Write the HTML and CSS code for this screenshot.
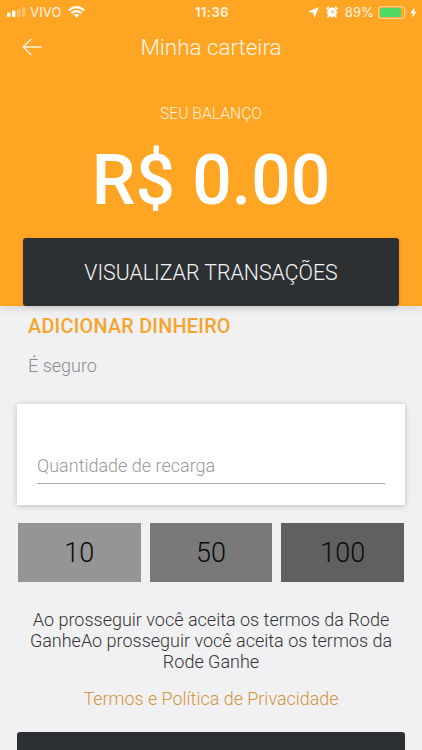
FILE: index.html
```
<!DOCTYPE html>
<html lang="pt-BR">
<head>
<meta charset="utf-8">
<meta name="viewport" content="width=device-width, initial-scale=1">
<title>Minha carteira</title>
<link rel="stylesheet" href="styles.css">
</head>
<body>
<header class="hero">
  <div class="status">
    <div class="status-left">
      <svg class="signal" width="19" height="10" viewBox="0 0 19 10" fill="#fff"><rect y="5.5" width="3.4" height="4.5" rx="1"/><rect x="5" y="3.5" width="3.4" height="6.5" rx="1"/><rect x="10" y="2" width="3.4" height="8" rx="1" opacity=".3"/><rect x="15" y="0" width="3.4" height="10" rx="1" opacity=".3"/></svg>
      <span class="carrier">VIVO</span>
      <svg class="wifi" width="17" height="12" viewBox="0 0 17 12" fill="none" stroke="#fff" stroke-width="2.1"><path d="M.8 4.4Q8.5-2 16.2 4.4M3.5 7.2Q8.5 3 13.5 7.2"/><path d="M5.7 8.8Q8.5 6.7 11.3 8.8L8.5 11.7Z" fill="#fff" stroke="none"/></svg>
    </div>
    <span class="time">11:36</span>
    <div class="status-right">
      <svg width="11" height="11" viewBox="0 0 11 11" fill="#fff"><path d="M11 0 6.4 11 5.3 5.8 0 4.8Z"/></svg>
      <svg class="alarm" width="12" height="12" viewBox="0 0 12 12"><path d="M.5 3.2 3 .9M11.5 3.2 9 .9M2.6 10 1.8 11.3M9.4 10l.8 1.3" stroke="#fff" stroke-width="1.6" fill="none"/><circle cx="6" cy="6.4" r="4.9" fill="#fff"/><path d="M6 3.8v2.8h2.2" stroke="#ffa524" stroke-width="1" fill="none"/></svg>
      <span class="percent">89%</span>
      <svg class="battery" width="29" height="13" viewBox="0 0 29 13"><rect x=".6" y=".6" width="26" height="11.8" rx="3" fill="none" stroke="#ffd397" stroke-width="1.1"/><rect x="2" y="2" width="21" height="9" rx="1.5" fill="#4cd964"/><path d="M27.8 4.5q1.6 2 0 4z" fill="#ffd397"/></svg>
      <svg class="bolt" width="7" height="11" viewBox="0 0 7 11" fill="#fff"><path d="M5 0 .3 6.2H3L1.9 11 6.7 4.5H4Z"/></svg>
    </div>
  </div>
  <nav class="nav">
    <svg width="20" height="18" viewBox="0 0 20 18" fill="none" stroke="#fff2dc" stroke-width="1.5"><path d="M9.4 1 1.2 9l8.2 8M1.2 9H19.5"/></svg>
    <h1>Minha carteira</h1>
  </nav>
  <p class="label">SEU BALANÇO</p>
  <p class="balance">R$ 0.00</p>
  <button class="transactions">VISUALIZAR TRANSAÇÕES</button>
</header>
<main>
  <h2>ADICIONAR DINHEIRO</h2>
  <p class="safe">É seguro</p>
  <div class="card"><div class="field"><span>Quantidade de recarga</span></div></div>
  <div class="amounts">
    <button class="amount low">10</button>
    <button class="amount mid">50</button>
    <button class="amount high">100</button>
  </div>
  <p class="terms">Ao prosseguir você aceita os termos da Rode<br>GanheAo prosseguir você aceita os termos da<br>Rode Ganhe</p>
  <a class="policy">Termos e Política de Privacidade</a>
  <div class="submit"></div>
</main>
</body>
</html>
```
FILE: styles.css
```
* { box-sizing: border-box; margin: 0; padding: 0; }
body { display: flex; flex-direction: column; width: 422px; height: 750px; background: #f1f1f3; font-family: Roboto, sans-serif; font-weight: 300; }
button { border: 0; font: inherit; display: block; }
svg { display: block; flex: none; }

.hero { flex: none; height: 306px; background: #ffa524; color: #fff; box-shadow: 0 2px 9px rgba(0, 0, 0, .13); }
.status { display: grid; grid-template-columns: 1fr auto 1fr; height: 24px; padding: 0 5px 0 7px; align-items: center; font-family: Inter, sans-serif; font-size: 13px; font-weight: 400; line-height: 24px; color: #fff5e6; }
.status-left, .status-right { display: flex; align-items: center; }
.status-right { justify-content: flex-end; }
.carrier { margin-left: 4px; letter-spacing: .2px; }
.wifi { margin-left: 6px; }
.time { font-weight: 600; letter-spacing: .5px; }
.alarm { margin-left: 7px; }
.percent { margin-left: 7px; letter-spacing: .1px; }
.battery { margin-left: 4px; }
.bolt { margin-left: 3px; }

.nav { display: grid; grid-template-columns: 20px 1fr 20px; align-items: center; height: 46px; padding: 0 22px; }
.nav h1 { font-size: 22.4px; font-weight: 300; text-align: center; line-height: 45px; color: #fff5e6; }
.label { margin-top: 33px; line-height: 21px; font-size: 15.7px; text-align: center; color: #fff0d8; }
.balance { margin-top: 17px; height: 80px; line-height: 80px; font-size: 69.5px; font-weight: 500; text-align: center; }
.transactions { width: 376px; height: 68px; margin: 17px 0 0 23px; border-radius: 3px; background: #2d3033; color: #f4f4f4; font-size: 21.3px; box-shadow: 0 1px 4px rgba(0, 0, 0, .12); }

main { flex: 1; display: flex; flex-direction: column; padding: 8px 17px 0; }
h2 { margin-left: 11px; line-height: 26px; font-size: 19.8px; letter-spacing: .27px; font-weight: 500; color: #f5a42c; }
.safe { margin: 14px 0 0 11px; line-height: 24px; font-size: 18px; color: #8c8c8e; }
.card { height: 101px; margin: 26px 0 0; padding: 48px 20px 0; background: #fff; box-shadow: 0 1px 6px rgba(0, 0, 0, .22); }
.field { height: 32px; border-bottom: 1px solid #aaa; line-height: 27px; font-size: 18px; color: #999; }
.amounts { display: grid; grid-template-columns: repeat(3, 1fr); gap: 9px; margin: 18px 1px 0; }
.amount { height: 59px; color: #0b0b0b; font-size: 27px; }
.low { background: #959595; }
.mid { background: #797979; }
.high { background: #606060; }
.terms { margin: 27px -10px 0; text-align: center; font-size: 18px; line-height: 21.2px; color: #333; }
.policy { display: block; margin-top: 14px; text-align: center; line-height: 24px; font-size: 17.95px; color: #d3943a; }
.submit { flex: 1; margin-top: 21px; border-radius: 3px 3px 0 0; background: #2d3033; }
```
